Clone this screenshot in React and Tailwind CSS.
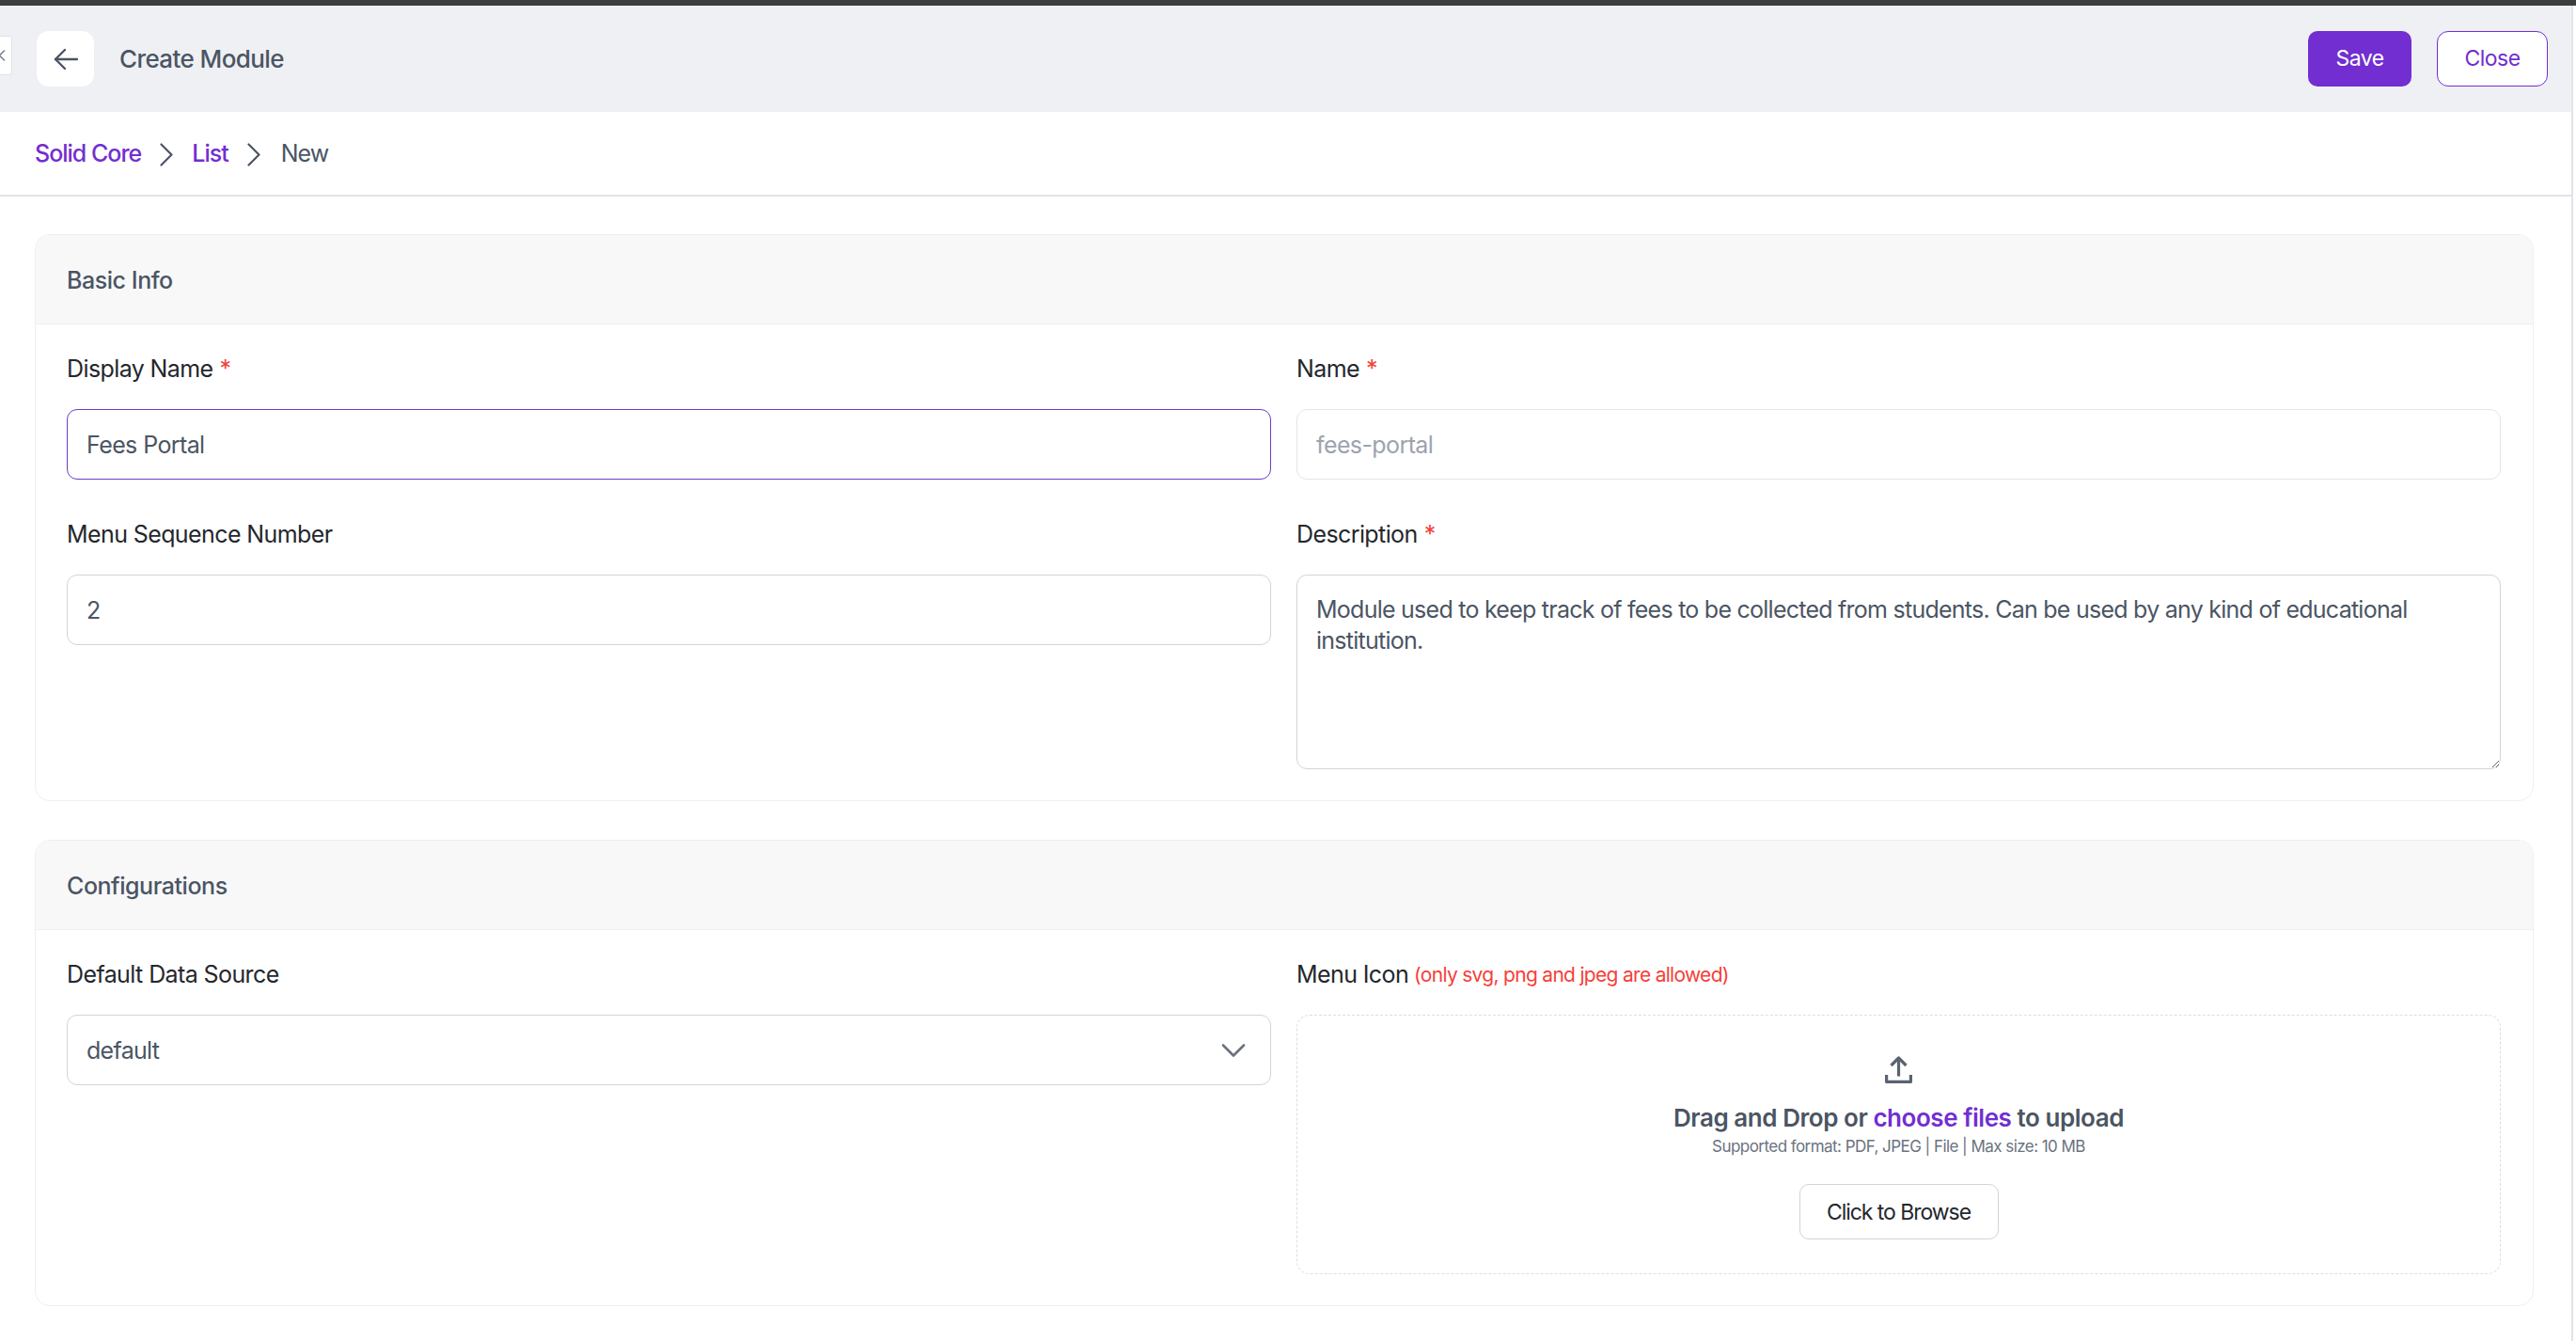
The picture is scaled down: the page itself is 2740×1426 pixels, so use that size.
import React from "react";
import { ChevronLeft } from "lucide-react";

function Label({ children, required, note }) {
  return (
    <div className="h-[30px] flex items-center text-[25px] leading-[30px] text-[#24272c] tracking-[-0.6px]">
      <span>{children}</span>
      {required && <span className="ml-[7px] text-[#f5403a]">*</span>}
      {note && <span className="ml-[6px] pt-[2px] text-[21px] text-[#f5403a] tracking-[-0.7px]">{note}</span>}
    </div>
  );
}

function Field({ children, label, required, note, className = "" }) {
  return (
    <div className={"flex flex-col " + className}>
      <div className="mb-[28px]">
        <Label required={required} note={note}>{label}</Label>
      </div>
      {children}
    </div>
  );
}

function TextInput({ value, focused, muted }) {
  return (
    <input
      readOnly
      value={value}
      className={
        "w-full h-[75px] px-[20px] rounded-[11px] bg-white border outline-none text-[25px] tracking-[-0.6px] " +
        (focused ? "border-[#6a3fc4] " : muted ? "border-[#e3e5ea] " : "border-[#d2d4dd] ") +
        (muted ? "text-[#9ca3af]" : "text-[#4b5563]")
      }
    />
  );
}

function Card({ title, children, bodyClass = "" }) {
  return (
    <section className="rounded-[16px] border border-[#eeeff1] overflow-hidden bg-white">
      <header className="h-[95px] pt-[3px] bg-[#f8f8f9] border-b border-[#eeeff1] flex items-center px-[33px] text-[25px] text-[#4b5563] font-medium tracking-[-0.45px]">
        {title}
      </header>
      <div className={"pl-[33px] pr-[34px] pt-[32px] pb-[33px] grid grid-cols-2 gap-x-[27px] " + bodyClass}>{children}</div>
    </section>
  );
}

function Crumb() {
  return (
    <svg width="14" height="25" viewBox="0 0 14 25" fill="none" stroke="#4b5563" strokeWidth="2.2" strokeLinecap="round" strokeLinejoin="round" className="mx-[20px]">
      <path d="M1.5 1.5L12.5 12.5L1.5 23.5" />
    </svg>
  );
}

export default function App() {
  return (
    <div className="w-[2740px] h-[1426px] overflow-hidden bg-white font-['Inter',sans-serif] relative">
      <div className="h-[6px] bg-[#3d3d3d]" />
      <div className="w-[2737px] h-[1420px] border-r-2 border-[#e1e4e8]">
        <div className="h-[113px] bg-[#eff0f4] flex items-center pl-[39px] pr-[25px]">
          <button className="w-[61px] h-[59px] rounded-[13px] bg-white flex items-center justify-center">
            <svg width="26" height="24" viewBox="0 0 26 24" fill="none" stroke="#4b5563" strokeWidth="2.4" strokeLinecap="round" strokeLinejoin="round">
              <path d="M25 12H2" />
              <path d="M12 2L2 12L12 22" />
            </svg>
          </button>
          <h1 className="ml-[27px] text-[26px] font-medium text-[#4b5563] tracking-[-0.6px]">Create Module</h1>
          <div className="ml-auto flex items-center gap-[27px]">
            <button className="w-[110px] h-[59px] rounded-[10px] bg-[#722ed1] text-white text-[23px] tracking-[-0.5px]">Save</button>
            <button className="w-[118px] h-[59px] rounded-[12px] bg-white border border-[#722ed1] text-[#722ed1] text-[23px] tracking-[-0.5px]">Close</button>
          </div>
        </div>

        <nav className="h-[90px] border-b-2 border-[#e1e5ea] flex items-center pl-[37px] pt-[2px] text-[25px] tracking-[-1px]">
          <span className="text-[#722ed1] font-medium">Solid Core</span>
          <Crumb />
          <span className="text-[#722ed1] font-medium">List</span>
          <Crumb />
          <span className="ml-[2px] text-[#4b5563]">New</span>
        </nav>

        <main className="pt-[40px] pl-[37px] pr-[40px] flex flex-col gap-[41px]">
          <Card title="Basic Info" bodyClass="gap-y-[43px]">
            <Field label="Display Name" required>
              <TextInput value="Fees Portal" focused />
            </Field>
            <Field label="Name" required>
              <TextInput value="fees-portal" muted />
            </Field>
            <Field label="Menu Sequence Number">
              <TextInput value="2" />
            </Field>
            <Field label="Description" required>
              <textarea
                readOnly
                value="Module used to keep track of fees to be collected from students. Can be used by any kind of educational institution."
                className="w-full h-[207px] px-[20px] pt-[20px] rounded-[11px] bg-white border border-[#d2d4dd] outline-none text-[25px] leading-[33px] tracking-[-0.75px] text-[#4b5563] resize-y block"
              />
            </Field>
          </Card>

          <Card title="Configurations">
            <Field label="Default Data Source">
              <div className="h-[75px] px-[20px] rounded-[11px] border border-[#d2d4dd] flex items-center justify-between text-[25px] tracking-[-0.7px] text-[#4b5563]">
                <span className="pt-[2px]">default</span>
                <svg width="26" height="16" viewBox="0 0 26 16" fill="none" stroke="#6b7280" strokeWidth="2.6" strokeLinecap="round" strokeLinejoin="round" className="mr-[6px]">
                  <path d="M2 2.5L13 13.5L24 2.5" />
                </svg>
              </div>
            </Field>
            <Field label="Menu Icon" note="(only svg, png and jpeg are allowed)">
              <div className="h-[276px] rounded-[14px] border border-dashed border-[#dcdee2] flex flex-col items-center pt-[43px]">
                <svg width="30" height="30" viewBox="0 0 30 30" fill="none" stroke="#5b6270" strokeWidth="3.2" strokeLinejoin="round">
                  <path d="M14.5 21.5V3" />
                  <path d="M6.5 10L14.5 2L22.5 10" />
                  <path d="M1.6 20V27.4H27.4V20" />
                </svg>
                <p className="mt-[19px] text-[26px] leading-[34px] font-semibold text-[#4b5563] tracking-[-0.45px]">
                  Drag and Drop or <span className="text-[#722ed1]">choose files</span> to upload
                </p>
                <p className="mt-[2px] text-[17px] leading-[22px] text-[#6b7280] tracking-[-0.55px]">
                  Supported format: PDF, JPEG | File | Max size: 10 MB
                </p>
                <button className="mt-[29px] w-[212px] h-[59px] pt-[2px] rounded-[10px] bg-white border border-[#d2d4dd] text-[23px] text-[#24272c] tracking-[-1.05px]">
                  Click to Browse
                </button>
              </div>
            </Field>
          </Card>
        </main>
      </div>

      <div className="absolute left-0 top-[38px] w-[13px] h-[42px] bg-white border border-l-0 border-[#dfe2e6] rounded-r-[4px] flex items-center justify-end overflow-hidden text-[#808690]">
        <ChevronLeft size={20} strokeWidth={2} className="shrink-0" />
      </div>
    </div>
  );
}
